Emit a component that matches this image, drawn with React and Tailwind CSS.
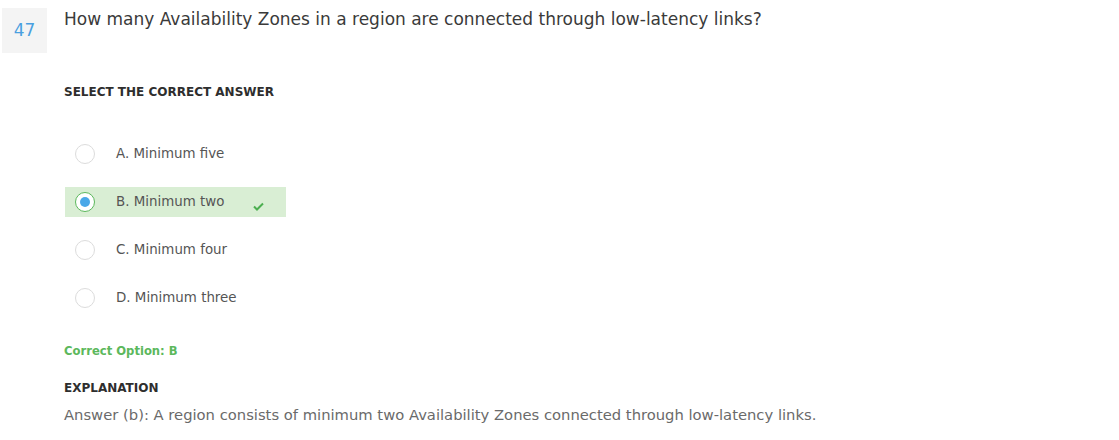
import React from "react";

const options = [
  { label: "A. Minimum five", selected: false },
  { label: "B. Minimum two", selected: true },
  { label: "C. Minimum four", selected: false },
  { label: "D. Minimum three", selected: false },
];

function Radio({ selected }) {
  if (selected) {
    return (
      <span className="w-[20px] h-[20px] rounded-full border border-[#5cb85c] bg-white flex items-center justify-center shrink-0">
        <span className="w-[10px] h-[10px] rounded-full bg-[#4aa8e8]" />
      </span>
    );
  }
  return <span className="w-[20px] h-[20px] rounded-full border border-[#dcdcdc] bg-white shrink-0" />;
}

export default function App() {
  return (
    <div
      className="w-[1119px] h-[440px] bg-white text-[#333] relative"
      style={{ fontFamily: '"DejaVu Sans", sans-serif' }}
    >
      <div className="flex items-start">
        <div className="ml-[2px] mt-[8px] w-[45px] h-[45px] bg-[#f4f4f4] flex items-center justify-center text-[17px] text-[#4a9fe0]">
          47
        </div>
        <div className="ml-[17px] mt-[7px] text-[17px] leading-[24px] text-[#3a3a3a]">
          How many Availability Zones in a region are connected through low-latency links?
        </div>
      </div>

      <div className="pl-[64px]">
        <div className="mt-[31px] h-[16px] leading-[16px] text-[12px] font-bold text-[#2e2e2e]">
          SELECT THE CORRECT ANSWER
        </div>

        <div className="mt-[39px] flex flex-col gap-[18px]">
          {options.map((o) => (
            <div
              key={o.label}
              className={
                "w-[221px] h-[30px] flex items-center pl-[10px] ml-[1px] " +
                (o.selected ? "bg-[#d9eed4]" : "")
              }
            >
              <Radio selected={o.selected} />
              <span className="ml-[21px] text-[13.4px] text-[#555] leading-[16px]">{o.label}</span>
              {o.selected && (
                <svg className="ml-[29px] mt-[9px]" width="11" height="9" viewBox="0 0 11 9">
                  <path d="M1 4.5 L4 7.5 L10 1.5" stroke="#4caf50" strokeWidth="2" fill="none" />
                </svg>
              )}
            </div>
          ))}
        </div>

        <div className="mt-[30px] h-[16px] leading-[16px] text-[11.6px] font-bold text-[#5cb85c]">
          Correct Option: B
        </div>

        <div className="mt-[21px] h-[16px] leading-[16px] text-[12px] font-bold text-[#2e2e2e]">
          EXPLANATION
        </div>

        <div className="mt-[9px] text-[14.75px] leading-[20px] text-[#6a6a6a]">
          Answer (b): A region consists of minimum two Availability Zones connected through low-latency links.
        </div>
      </div>
    </div>
  );
}
